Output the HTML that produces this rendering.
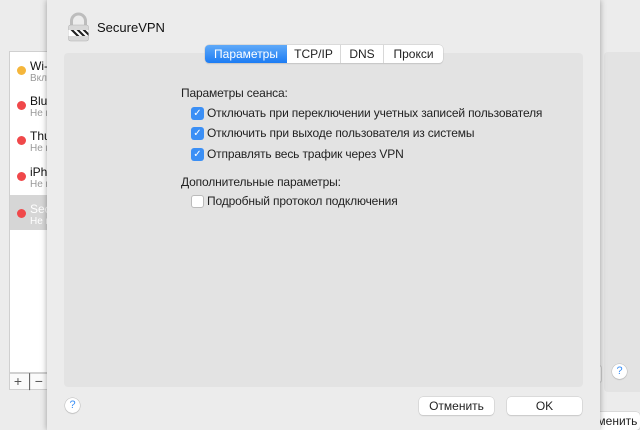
<!DOCTYPE html>
<html><head><meta charset="utf-8"><style>
*{margin:0;padding:0;box-sizing:border-box}
body{width:640px;height:430px;overflow:hidden;background:#ececec;font-family:"Liberation Sans",sans-serif;position:relative;font-size:12px;color:#222}
.abs{position:absolute}
.list{left:9px;top:51px;width:60px;height:322px;background:#fff;border:1px solid #d0d0d0}
.row{position:absolute;left:0;width:60px;height:35px}
.dot{position:absolute;left:7px;top:14px;width:9px;height:9px;border-radius:50%;background:#f0484a}
.nm{position:absolute;left:20px;top:7px;font-size:12px;color:#111}
.sb{position:absolute;left:20px;top:21px;font-size:10px;color:#999}
.sheet{left:47px;top:0;width:553px;height:430px;background:#ececec;box-shadow:0 0 6px rgba(0,0,0,.35)}
.panel{left:64px;top:53px;width:519px;height:334px;background:#e3e3e3;border-radius:4px}
.tabs{left:205px;top:45px;height:18px;display:flex;border-radius:4px;box-shadow:0 0 0 .5px #c8c8c8,0 1px 1px rgba(0,0,0,.15);background:#fff;overflow:hidden}
.tab{height:18px;line-height:18px;font-size:12px;text-align:center;border-left:1px solid #d8d8d8}
.tab.on{background:linear-gradient(#5fa9f8,#1c7cf4);color:#fff;border:none}
.cb{position:absolute;width:13px;height:13px;border-radius:3px;background:#3b8ff5;color:#fff;font-size:10px;line-height:13px;text-align:center}
.cb.off{background:#fff;border:1px solid #bbb}
.lbl{position:absolute;font-size:12px;color:#222;white-space:nowrap;letter-spacing:-.15px}
.btn{position:absolute;height:18px;background:#fff;border-radius:4px;box-shadow:0 0 0 .5px #c8c8c8,0 1px 1px rgba(0,0,0,.15);font-size:12px;line-height:18px;text-align:center}
.help{position:absolute;width:15px;height:15px;border-radius:50%;background:#fff;box-shadow:0 0 0 .5px #bbb,0 1px 1px rgba(0,0,0,.15);color:#3b8ff5;font-size:11px;line-height:15px;text-align:center}
</style></head><body>
<div class="abs list">
<div class="row" style="top:0"><div class="dot" style="background:#f5b63b"></div><div class="nm">Wi-Fi</div><div class="sb">Вкл.</div></div>
<div class="row" style="top:35px"><div class="dot"></div><div class="nm">Bluetooth</div><div class="sb">Не п</div></div>
<div class="row" style="top:70px"><div class="dot"></div><div class="nm">Thunder</div><div class="sb">Не п</div></div>
<div class="row" style="top:106px"><div class="dot"></div><div class="nm">iPhone</div><div class="sb">Не п</div></div>
<div class="row" style="top:143px;background:#d6d6d6"><div class="dot"></div><div class="nm" style="color:#fff">Secure</div><div class="sb" style="color:#fff">Не н</div></div>
</div>
<div class="abs" style="left:9px;top:373px;width:40px;height:17px;border:1px solid #d0d0d0;background:#fafafa;font-size:14px;line-height:15px;color:#555">&nbsp;+ │−</div>
<div class="abs" style="left:604px;top:52px;width:36px;height:340px;background:#e3e3e3;border-radius:4px 0 0 4px"></div>
<div class="abs" style="left:590px;top:365px;width:12px;height:18px;background:#fff;border:1px solid #ccc;border-radius:3px"></div>
<div class="help" style="left:612px;top:364px">?</div>
<div class="btn" style="left:580px;top:412px;width:60px">Отменить</div>

<div class="abs sheet"></div>
<svg class="abs" style="left:66px;top:12px" width="25" height="30" viewBox="0 0 24 30">
<path d="M5 13V9a7 7 0 0 1 14 0v4" fill="none" stroke="#bdbdbd" stroke-width="3"/>
<rect x="2" y="13" width="20" height="16" rx="2" fill="#d8d8d8" stroke="#b0b0b0" stroke-width=".5"/>
<rect x="2" y="18" width="20" height="6" fill="#fff"/>
<path d="M4 18l6 6h3l-6-6zM10 18l6 6h3l-6-6zM16 18l6 6v-3l-3-3z" fill="#222"/>
</svg>
<div class="lbl" style="left:97px;top:20px;font-size:13px;color:#111;letter-spacing:0">SecureVPN</div>
<div class="abs panel"></div>
<div class="abs tabs">
<div class="tab on" style="width:82px">Параметры</div>
<div class="tab" style="width:53px;border:none">TCP/IP</div>
<div class="tab" style="width:43px">DNS</div>
<div class="tab" style="width:60px">Прокси</div>
</div>
<div class="lbl" style="left:181px;top:86px">Параметры сеанса:</div>
<div class="cb" style="left:191px;top:107px">✓</div><div class="lbl" style="left:207px;top:106px">Отключать при переключении учетных записей пользователя</div>
<div class="cb" style="left:191px;top:127px">✓</div><div class="lbl" style="left:207px;top:126px">Отключить при выходе пользователя из системы</div>
<div class="cb" style="left:191px;top:148px">✓</div><div class="lbl" style="left:207px;top:147px">Отправлять весь трафик через VPN</div>
<div class="lbl" style="left:181px;top:175px">Дополнительные параметры:</div>
<div class="cb off" style="left:191px;top:195px"></div><div class="lbl" style="left:207px;top:194px">Подробный протокол подключения</div>
<div class="help" style="left:65px;top:398px">?</div>
<div class="btn" style="left:419px;top:397px;width:75px">Отменить</div>
<div class="btn" style="left:507px;top:397px;width:75px">OK</div>
</body></html>
